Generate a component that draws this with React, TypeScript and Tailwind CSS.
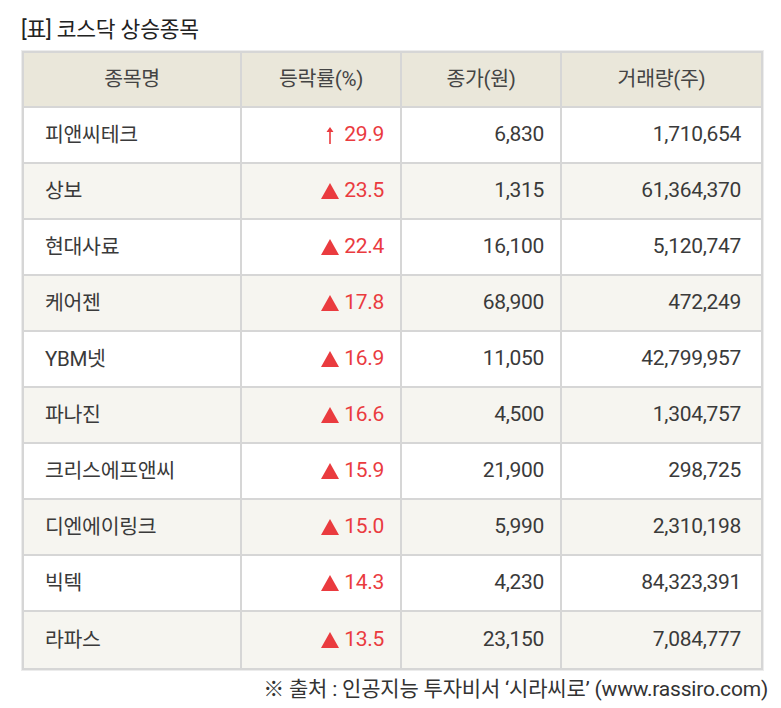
import React from 'react';

interface StockRow {
  name: string;
  rate: string;
  upper?: boolean;
  price: string;
  volume: string;
}

const rows: StockRow[] = [
  { name: '피앤씨테크', rate: '29.9', upper: true, price: '6,830', volume: '1,710,654' },
  { name: '상보', rate: '23.5', price: '1,315', volume: '61,364,370' },
  { name: '현대사료', rate: '22.4', price: '16,100', volume: '5,120,747' },
  { name: '케어젠', rate: '17.8', price: '68,900', volume: '472,249' },
  { name: 'YBM넷', rate: '16.9', price: '11,050', volume: '42,799,957' },
  { name: '파나진', rate: '16.6', price: '4,500', volume: '1,304,757' },
  { name: '크리스에프앤씨', rate: '15.9', price: '21,900', volume: '298,725' },
  { name: '디엔에이링크', rate: '15.0', price: '5,990', volume: '2,310,198' },
  { name: '빅텍', rate: '14.3', price: '4,230', volume: '84,323,391' },
  { name: '라파스', rate: '13.5', price: '23,150', volume: '7,084,777' },
];

const font = { fontFamily: 'Roboto, "Noto Sans CJK KR", sans-serif' };

const App: React.FC = () => {
  return (
    <div className="w-[781px] h-[708px] bg-white text-[#333]" style={font}>
      <div className="pl-[21px] pt-[16px] text-[21.5px] leading-[28px] text-[#222] tracking-[-0.2px]">
        [표] 코스닥 상승종목
      </div>
      <div className="ml-[22px] mt-[7px] w-[741px] border-2 border-[#d6d6d6] shadow-[0_0_0_1px_#ececec]">
        <div className="grid grid-cols-[218px_160px_160px_1fr] h-[55px] bg-[#eae7da] border-b-2 border-[#d6d6d6] text-[20.5px] text-[#444] tracking-[-0.3px]">
          <div className="flex items-center justify-center border-r-2 border-[#d6d6d6]">종목명</div>
          <div className="flex items-center justify-center border-r-2 border-[#d6d6d6]">등락률(%)</div>
          <div className="flex items-center justify-center border-r-2 border-[#d6d6d6]">종가(원)</div>
          <div className="flex items-center justify-center">거래량(주)</div>
        </div>
        {rows.map((r, i) => (
          <div
            key={r.name}
            className={`grid grid-cols-[218px_160px_160px_1fr] h-[56px] text-[21px] tracking-[-0.3px] ${
              i % 2 === 1 ? 'bg-[#f6f5f0]' : 'bg-white'
            } ${i < rows.length - 1 ? 'border-b-2 border-[#d6d6d6]' : ''}`}
          >
            <div className="flex items-center pl-[21px] border-r-2 border-[#d6d6d6] text-[20.5px] text-[#3a3a3a]">
              {r.name}
            </div>
            <div className="flex items-center justify-end pr-[16px] border-r-2 border-[#d6d6d6] text-[#ea3b3f]">
              {r.upper ? (
                <svg width="8" height="19" viewBox="0 0 8 19" className="mr-[10px]">
                  <path d="M4 1 L7.5 6 L4.8 6 L4.8 18 L3.2 18 L3.2 6 L0.5 6 Z" fill="#ea3b3f" />
                </svg>
              ) : (
                <svg width="18" height="16" viewBox="0 0 18 16" className="mr-[5px]">
                  <path d="M9 0 L18 16 L0 16 Z" fill="#ea3b3f" />
                </svg>
              )}
              <span>{r.rate}</span>
            </div>
            <div className="flex items-center justify-end pr-[16px] border-r-2 border-[#d6d6d6] text-[#3a3a3a]">
              {r.price}
            </div>
            <div className="flex items-center justify-end pr-[20px] text-[#3a3a3a]">{r.volume}</div>
          </div>
        ))}
      </div>
      <div className="pr-[13px] mt-[5px] text-right text-[21px] leading-[28px] text-[#333] tracking-[-0.2px]">
        ※ 출처 : 인공지능 투자비서 ‘시라씨로’ (www.rassiro.com)
      </div>
    </div>
  );
};

export default App;
